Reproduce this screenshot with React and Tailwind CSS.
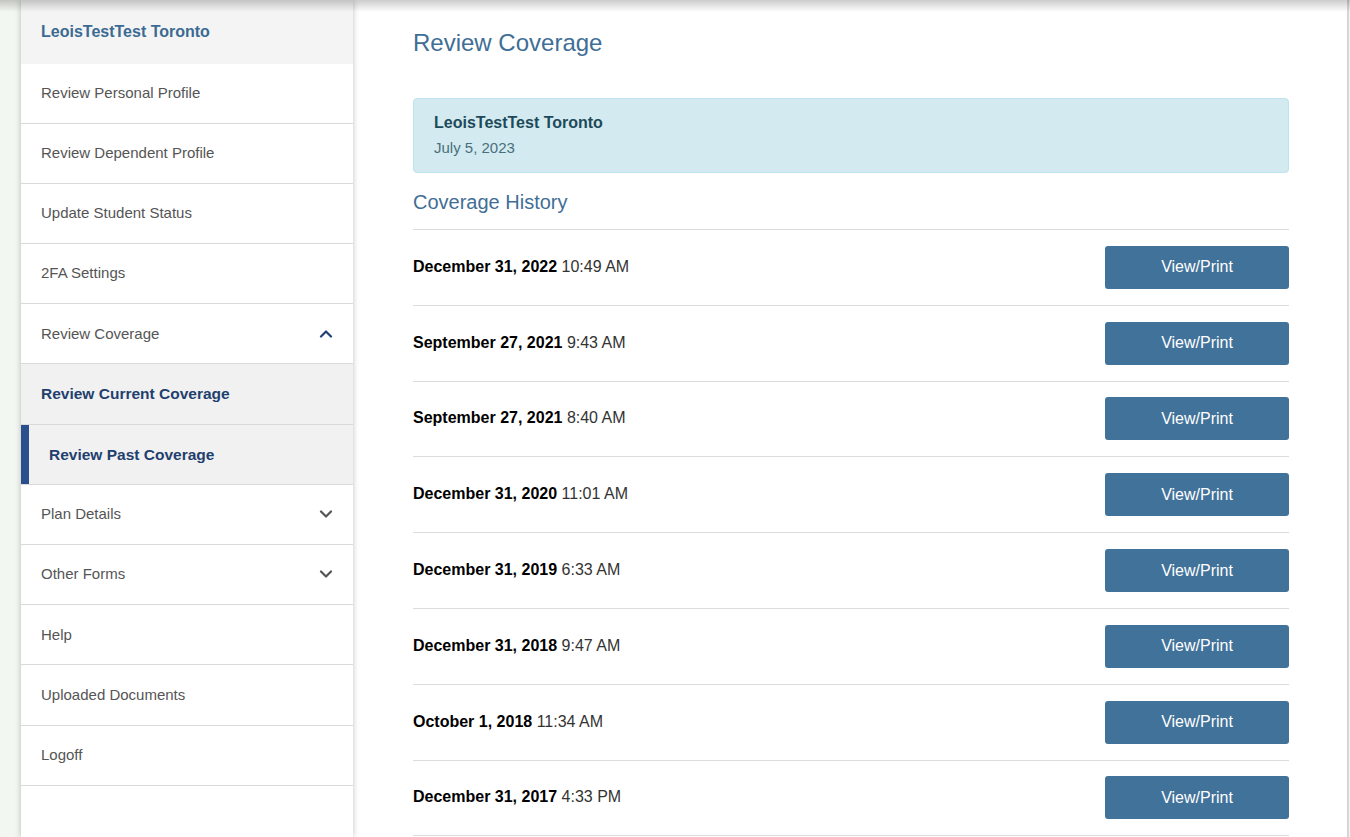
import React from 'react';

const font = { fontFamily: '"Liberation Sans", Arial, sans-serif' };

const Chevron = ({ up, className }) => (
  <svg width="14" height="9" viewBox="0 0 14 9" className={className} fill="none">
    <path
      d={up ? 'M2 7.5 L7 2.5 L12 7.5' : 'M2 1.5 L7 6.5 L12 1.5'}
      stroke="currentColor"
      strokeWidth="2.2"
      strokeLinecap="round"
      strokeLinejoin="round"
    />
  </svg>
);

const menu = [
  { label: 'Review Personal Profile' },
  { label: 'Review Dependent Profile' },
  { label: 'Update Student Status' },
  { label: '2FA Settings' },
  { label: 'Review Coverage', chevron: 'up' },
  { label: 'Review Current Coverage', sub: true },
  { label: 'Review Past Coverage', sub: true, active: true },
  { label: 'Plan Details', chevron: 'down' },
  { label: 'Other Forms', chevron: 'down' },
  { label: 'Help' },
  { label: 'Uploaded Documents' },
  { label: 'Logoff' },
];

const history = [
  ['December 31, 2022', '10:49 AM'],
  ['September 27, 2021', '9:43 AM'],
  ['September 27, 2021', '8:40 AM'],
  ['December 31, 2020', '11:01 AM'],
  ['December 31, 2019', '6:33 AM'],
  ['December 31, 2018', '9:47 AM'],
  ['October 1, 2018', '11:34 AM'],
  ['December 31, 2017', '4:33 PM'],
];

const MenuItem = ({ item }) => {
  if (item.sub) {
    return (
      <div className="flex h-[60.2px] items-stretch border-b border-[#d9d9d9] bg-[#f1f1f1]">
        {item.active && <div className="w-[8px] bg-[#2a4f8c]" />}
        <div className="flex items-center pl-[20px] text-[15.5px] font-bold text-[#1f3f6e]">
          {item.label}
        </div>
      </div>
    );
  }
  return (
    <div className="flex h-[60.2px] items-center justify-between border-b border-[#d9d9d9] pl-[20px] pr-[20px] text-[15px] text-[#555]">
      <span>{item.label}</span>
      {item.chevron === 'up' && <Chevron up className="text-[#243f73]" />}
      {item.chevron === 'down' && <Chevron className="text-[#555]" />}
    </div>
  );
};

const App = () => {
  return (
    <div className="relative flex min-h-[837px] bg-[#f3f7f1]" style={font}>
      {/* top shadow overlay */}
      <div className="pointer-events-none absolute inset-x-0 top-0 z-10 h-[12px] bg-gradient-to-b from-black/20 to-transparent" />

      <div className="w-[21px] shrink-0" />

      {/* sidebar */}
      <aside className="relative z-[1] w-[332px] shrink-0 bg-white shadow-[0_0_6px_rgba(0,0,0,0.25)]">
        <div className="flex h-[63.5px] items-center bg-[#f4f4f4] pl-[20px] text-[16px] font-bold text-[#3b6a92]">
          LeoisTestTest Toronto
        </div>
        {menu.map((item) => (
          <MenuItem key={item.label} item={item} />
        ))}
      </aside>

      {/* main */}
      <main className="mr-[1px] flex-1 border-r-2 border-[#d6d6d6] bg-white pl-[60px] pr-[58px] pt-[28px]">
        <h1 className="text-[24px] leading-[30px] text-[#3f6e96]">Review Coverage</h1>

        <div className="mt-[40px] rounded-[4px] border border-[#bde3ec] bg-[#d3eaf0] px-[20px] pb-[14px] pt-[14px]">
          <div className="text-[16px] font-bold leading-[20px] text-[#1d4a5a]">LeoisTestTest Toronto</div>
          <div className="mt-[5px] text-[15px] leading-[20px] text-[#48707c]">July 5, 2023</div>
        </div>

        <h2 className="mt-[15px] text-[20px] leading-[28px] text-[#3f6e96]">Coverage History</h2>

        <div className="mt-[13px] border-t border-[#dcdcdc]">
          {history.map(([date, time], i) => (
            <div
              key={i}
              className="flex h-[75.8px] items-center justify-between border-b border-[#dcdcdc] text-[16px]"
            >
              <div className="-mt-[1px]">
                <span className="font-bold text-black">{date}</span>{' '}
                <span className="text-[#333]">{time}</span>
              </div>
              <button className="h-[43px] w-[184px] rounded-[3px] bg-[#41729a] text-[16px] text-white">
                View/Print
              </button>
            </div>
          ))}
        </div>
      </main>
    </div>
  );
};

export default App;
